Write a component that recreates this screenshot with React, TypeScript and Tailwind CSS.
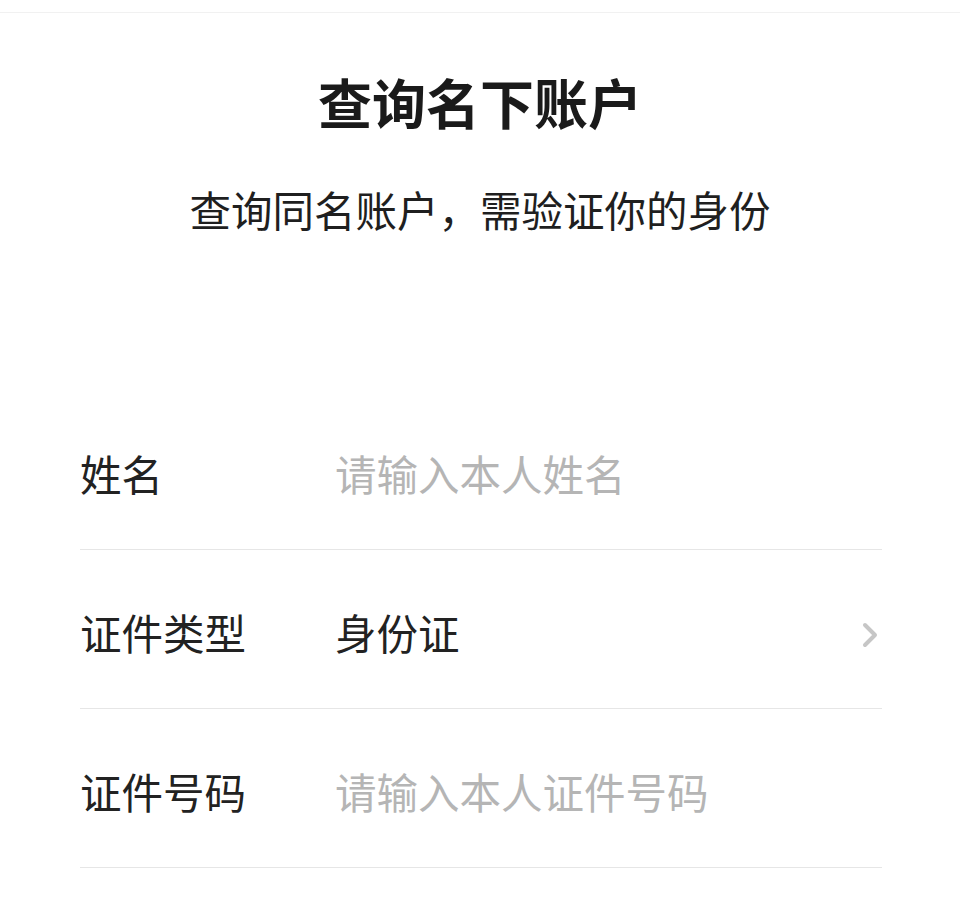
import React from 'react'

const font = { fontFamily: '"Noto Sans CJK SC", "Noto Sans", sans-serif' }

type Row = { label: string; value: string; placeholder?: boolean; arrow?: boolean }

const rows: Row[] = [
  { label: '姓名', value: '请输入本人姓名', placeholder: true },
  { label: '证件类型', value: '身份证', arrow: true },
  { label: '证件号码', value: '请输入本人证件号码', placeholder: true },
]

export default function App() {
  return (
    <div className="min-h-[901px] w-[960px] bg-white" style={font}>
      <div className="h-[13px] border-b border-[#f1f1f1]" />
      <h1 className="mt-[62px] text-center text-[54px] font-bold leading-none text-[#1a1a1a]">查询名下账户</h1>
      <p className="mt-[60px] text-center text-[41.5px] leading-none text-[#1f1f1f]">查询同名账户，需验证你的身份</p>
      <div className="mt-[160px] pl-[80px] pr-[78px]">
        {rows.map((r) => (
          <div key={r.label} className="flex h-[159px] items-center border-b border-[#e6e6e6] pt-[8px]">
            <span className="w-[255px] text-[41.5px] leading-none text-[#222]">{r.label}</span>
            <span className={`flex-1 text-[41.5px] leading-none ${r.placeholder ? 'text-[#b5b5b5]' : 'text-[#222]'}`}>{r.value}</span>
            {r.arrow && (
              <svg width="20" height="30" viewBox="0 0 20 30" className="mr-[2px] mt-[4px]">
                <path d="M5 5 L15 15 L5 25" fill="none" stroke="#c6c6c6" strokeWidth="4" strokeLinecap="round" strokeLinejoin="round" />
              </svg>
            )}
          </div>
        ))}
      </div>
    </div>
  )
}
